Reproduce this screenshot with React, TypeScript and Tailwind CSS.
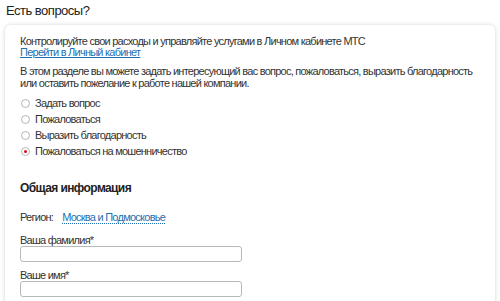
const Radio = ({ label, checked }: { label: string; checked?: boolean }) => (
  <label className="flex items-center h-4">
    <span className="w-[9px] h-[9px] rounded-full border border-[#b5b5b5] bg-white flex items-center justify-center mr-[5px] ml-px">
      {checked && <span className="w-[3px] h-[3px] rounded-full bg-[#e30611]" />}
    </span>
    <span>{label}</span>
  </label>
);

const App = () => {
  return (
    <div className="w-[500px] h-[301px] overflow-hidden bg-white text-[11px] tracking-[-0.75px] leading-[12px] text-[#333] font-['Liberation_Sans',Arial,sans-serif]">
      <div className="px-[6px] pt-[4px] pb-[7px] text-[13px] tracking-[-0.5px] leading-[14px] text-[#222]">Есть вопросы?</div>
      <div className="mx-[5px] rounded-[6px] bg-white shadow-[0_0_4px_rgba(0,0,0,0.18)] px-[15px] pt-[11px] h-[400px]">
        <div className="leading-[11px]">
          <p>Контролируйте свои расходы и управляйте услугами в Личном кабинете МТС</p>
          <a className="text-[#1d6fb3] underline">Перейти в Личный кабинет</a>
        </div>
        <p className="mt-[7px] leading-[12px] whitespace-nowrap">
          В этом разделе вы можете задать интересующий вас вопрос, пожаловаться, выразить благодарность
          <br />
          или оставить пожелание к работе нашей компании.
        </p>
        <div className="mt-[6px] flex flex-col">
          <Radio label="Задать вопрос" />
          <Radio label="Пожаловаться" />
          <Radio label="Выразить благодарность" />
          <Radio label="Пожаловаться на мошенничество" checked />
        </div>
        <h3 className="mt-[22px] font-bold text-[12px] tracking-[-0.6px] leading-[14px] text-[#222]">Общая информация</h3>
        <div className="mt-[15px] flex items-center h-[14px]">
          <span>Регион:</span>
          <a className="ml-[9px] text-[#1d6fb3] border-b border-dotted border-[#1d6fb3] leading-[12px]">Москва и Подмосковье</a>
        </div>
        <div className="mt-[10px]">Ваша фамилия*</div>
        <div className="w-[222px] h-[16px] rounded-[3px] border border-[#b9b9b9] bg-white" />
        <div className="mt-[7px]">Ваше имя*</div>
        <div className="w-[222px] h-[16px] rounded-[3px] border border-[#b9b9b9] bg-white" />
      </div>
    </div>
  );
};

export default App;
